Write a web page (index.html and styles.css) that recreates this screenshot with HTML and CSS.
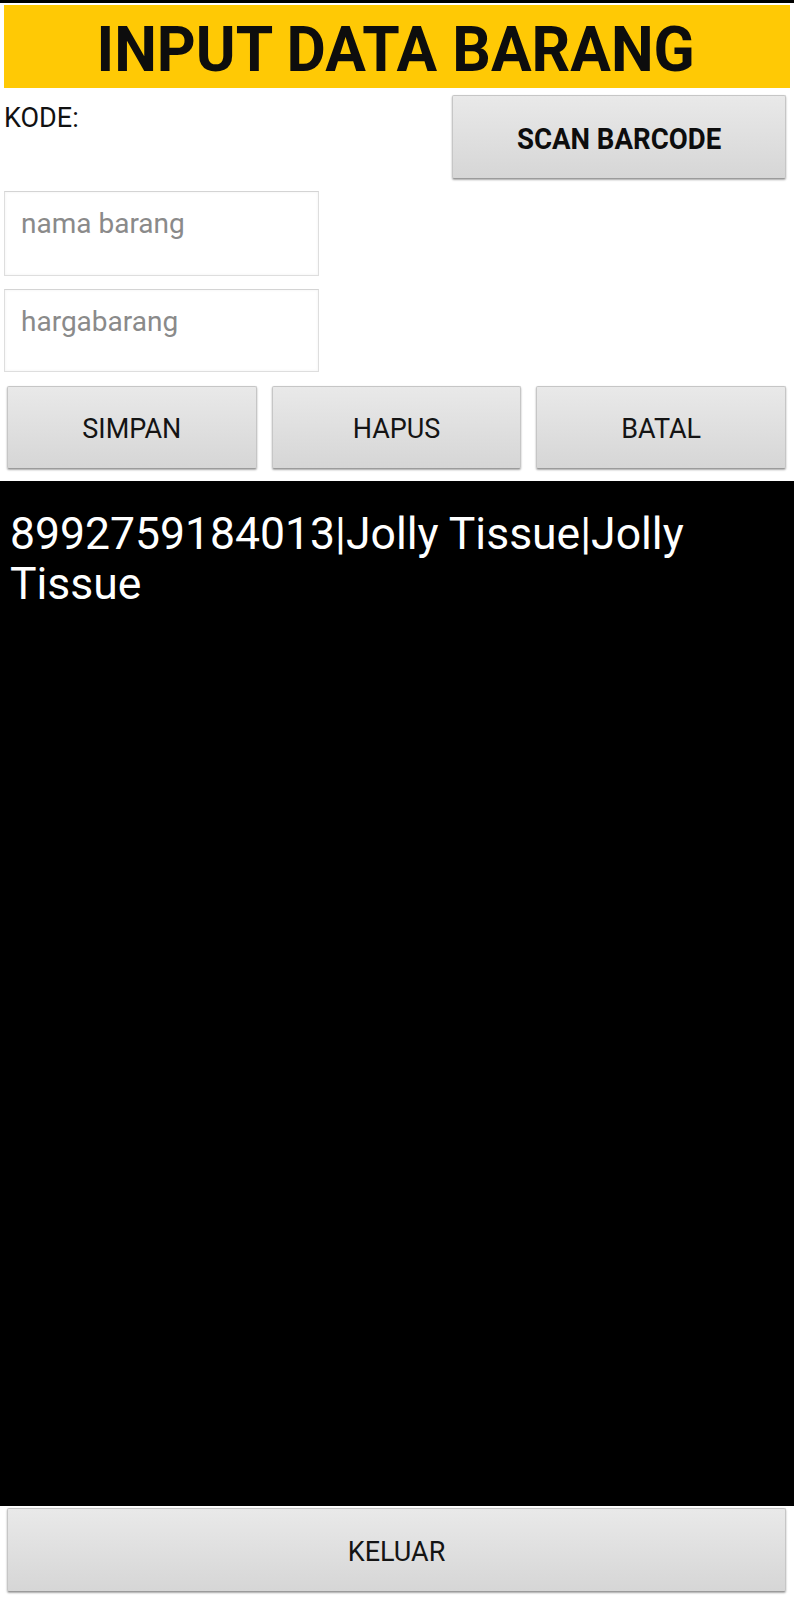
FILE: index.html
```html
<!DOCTYPE html>
<html lang="id">
<head>
<meta charset="utf-8">
<title>Input Data Barang</title>
<link rel="stylesheet" href="styles.css">
</head>
<body>
<div class="topline"></div>
<header class="title-bar"><span class="title">INPUT DATA BARANG</span></header>
<div class="row-code">
  <div class="code-label">KODE:</div>
  <button class="btn btn-scan"><span class="scan-text">SCAN BARCODE</span></button>
</div>
<div class="field field-name"><span class="placeholder">nama barang</span></div>
<div class="field field-price"><span class="placeholder">hargabarang</span></div>
<div class="actions">
  <button class="btn btn-action">SIMPAN</button>
  <button class="btn btn-action">HAPUS</button>
  <button class="btn btn-action">BATAL</button>
</div>
<div class="list">8992759184013|Jolly Tissue|Jolly Tissue</div>
<div class="footer">
  <button class="btn btn-exit">KELUAR</button>
</div>
</body>
</html>
```
FILE: styles.css
```css
* { box-sizing: border-box; }
html, body {
  margin: 0;
  padding: 0;
  background: #ffffff;
  width: 794px;
  height: 1600px;
  overflow: hidden;
  font-family: Roboto, "Liberation Sans", sans-serif;
  color: #111;
}
.topline {
  height: 3px;
  background: #000;
}
.title-bar {
  margin: 2px 4px 0;
  height: 83px;
  padding-top: 6px;
  background: #ffc905;
  display: flex;
  align-items: center;
  justify-content: center;
}
.title {
  display: inline-block;
  font-weight: 700;
  font-size: 63px;
  line-height: 1;
  color: #0d0d0d;
  transform: scaleX(0.96);
  margin-left: -2px;
}
.row-code {
  display: flex;
  justify-content: space-between;
  align-items: flex-start;
  margin-top: 7px;
}
.code-label {
  margin: 9px 0 0 4px;
  font-size: 27px;
  line-height: 28px;
  color: #111;
}
.btn {
  font-family: Roboto, "Liberation Sans", sans-serif;
  background: linear-gradient(#e9e9e9, #d6d6d6);
  border: 1px solid #c6c6c6;
  border-bottom-color: #9b9b9b;
  border-radius: 2px;
  box-shadow: 0 1px 2px rgba(0, 0, 0, 0.35);
  color: #141414;
  padding: 3px 0 0;
  display: flex;
  align-items: center;
  justify-content: center;
}
.btn-scan {
  width: 334px;
  height: 84px;
  margin-right: 8px;
}
.scan-text {
  display: inline-block;
  font-weight: 700;
  font-size: 30px;
  transform: scaleX(0.92);
  color: #0d0d0d;
}
.field {
  margin-left: 4px;
  width: 315px;
  border: 1px solid #dedede;
  border-top-color: #d4d4d4;
  box-shadow: inset 0 0 3px rgba(0, 0, 0, 0.06);
  background: #fff;
  padding: 15px 0 0 16px;
}
.field-name {
  margin-top: 12px;
  height: 85px;
}
.field-price {
  margin-top: 13px;
  height: 83px;
}
.placeholder {
  font-size: 28px;
  line-height: 33px;
  color: #8a8a8a;
}
.actions {
  display: flex;
  gap: 15px;
  margin: 14px 8px 0 7px;
}
.btn-action {
  flex: 1;
  height: 83px;
  font-size: 27px;
}
.list {
  margin-top: 12px;
  height: 1025px;
  background: #000;
  color: #fff;
  font-size: 44.5px;
  line-height: 50px;
  padding: 28px 10px 0 10px;
}
.footer {
  padding: 2px 8px 0 7px;
}
.btn-exit {
  width: 100%;
  height: 84px;
  font-size: 27px;
}
```
